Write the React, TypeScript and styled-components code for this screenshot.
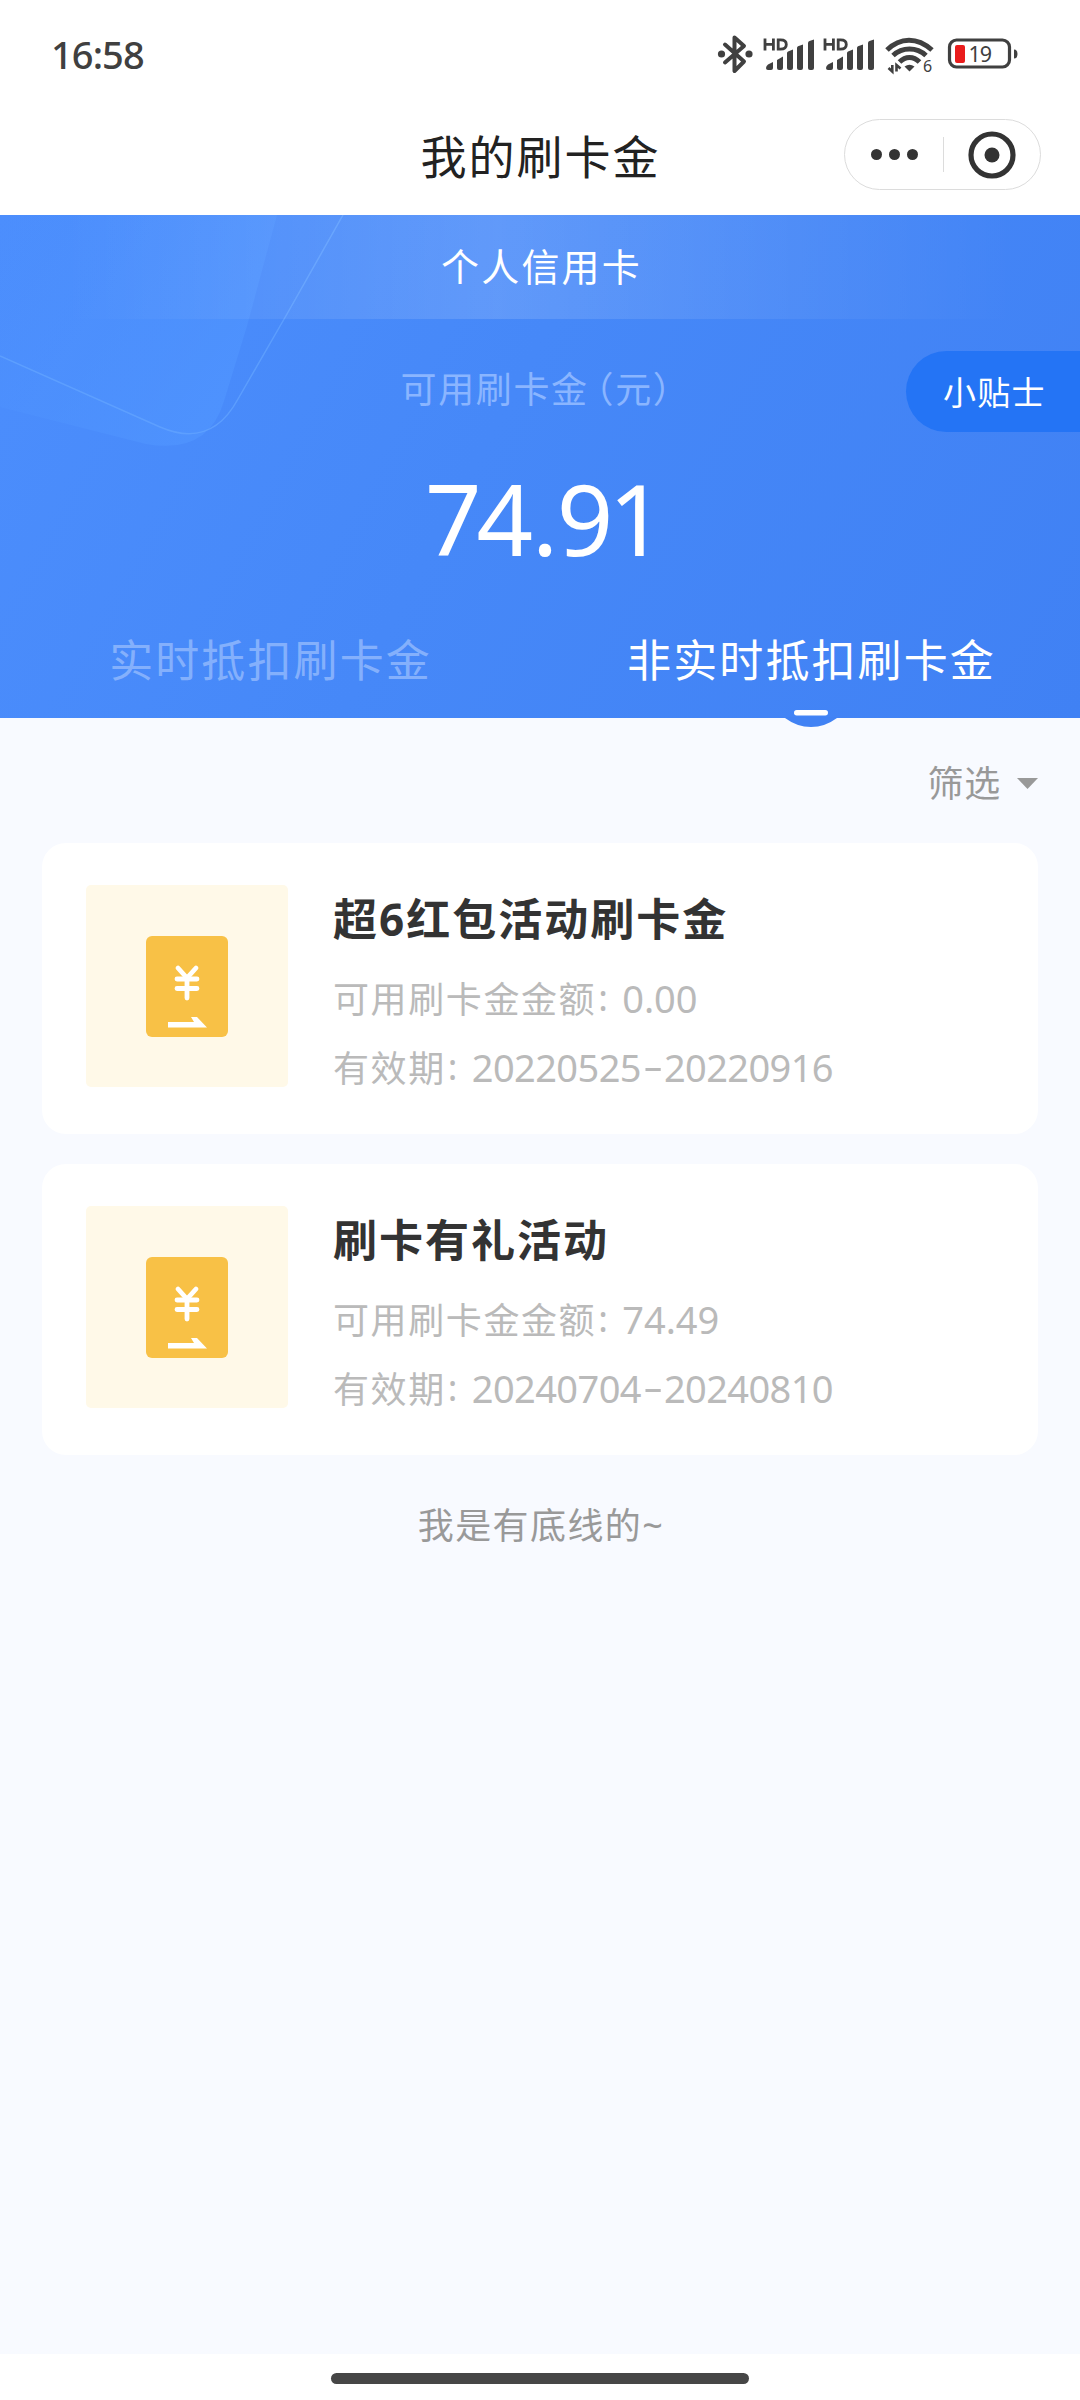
import React from "react";
import styled, { createGlobalStyle } from "styled-components";

const GlobalStyle = createGlobalStyle`
  * { box-sizing: border-box; }
  body {
    margin: 0;
    background: #ffffff;
    font-family: "Noto Sans", "Noto Sans CJK SC", sans-serif;
  }
`;

const Screen = styled.div`
  width: 1080px;
  height: 2400px;
  display: flex;
  flex-direction: column;
  overflow: hidden;
  background: #ffffff;
`;

const StatusBar = styled.header`
  height: 110px;
  padding: 0 61px 0 51px;
  display: flex;
  align-items: center;
  justify-content: space-between;
`;

const Clock = styled.time`
  padding-bottom: 2px;
  color: #404040;
  font-size: 38px;
  font-weight: 500;
  line-height: 40px;
  letter-spacing: -0.9px;
`;

const StatusIcons = styled.div`
  height: 42px;
  display: flex;
  align-items: center;
`;

const NavBar = styled.nav`
  height: 105px;
  padding: 0 39px 16px;
  display: grid;
  grid-template-columns: 1fr auto 1fr;
  align-items: center;
`;

const PageTitle = styled.h1`
  grid-column: 2;
  margin: 0;
  padding: 2px 0 0 1px;
  color: #222222;
  font-size: 46px;
  font-weight: 400;
  line-height: 60px;
  letter-spacing: 2px;
`;

const Capsule = styled.div`
  justify-self: end;
  width: 197px;
  height: 71px;
  border: 1px solid #dcdcdc;
  border-radius: 36px;
  display: grid;
  grid-template-columns: 98px 1px 96px;
  align-items: center;
`;

const CapsuleButton = styled.button`
  height: 100%;
  padding: 0;
  border: 0;
  background: none;
  display: flex;
  align-items: center;
  justify-content: center;
  gap: 7px;
`;

const Dot = styled.span`
  width: 11px;
  height: 11px;
  border-radius: 50%;
  background: #333333;
`;

const CapsuleDivider = styled.span`
  width: 1px;
  height: 35px;
  background: #dcdcdc;
`;

const Hero = styled.section`
  position: relative;
  height: 503px;
  flex: none;
  display: flex;
  flex-direction: column;
  color: #ffffff;
  background: linear-gradient(118deg, #4c8efd 0%, #4688f8 45%, #4081f4 100%);
`;

const HeroPattern = styled.svg`
  position: absolute;
  left: 0;
  top: 0;
`;

const AccountBand = styled.div`
  position: relative;
  flex: none;
  height: 104px;
  padding: 0 0 5px 3px;
  display: flex;
  align-items: center;
  justify-content: center;
  font-size: 38px;
  letter-spacing: 2.2px;
  background: linear-gradient(90deg, rgba(255, 255, 255, 0) 6%, rgba(255, 255, 255, 0.14) 46%, rgba(255, 255, 255, 0) 94%);
`;

const Balance = styled.div`
  position: relative;
  flex: 1;
  display: flex;
  flex-direction: column;
  align-items: center;
`;

const BalanceLabel = styled.div`
  margin-top: 43px;
  padding-right: 7px;
  color: #8ab5ff;
  font-size: 36px;
  line-height: 50px;
  letter-spacing: 1.6px;
  white-space: nowrap;
`;

const Bracket = styled.span<{ $gap?: number }>`
  margin-left: ${(p) => p.$gap ?? 0}px;
  font-family: "Noto Sans CJK SC", sans-serif;
  font-feature-settings: "halt";
`;

const BalanceAmount = styled.div`
  margin-top: 43px;
  padding-left: 5px;
  font-size: 99px;
  line-height: 120px;
  letter-spacing: -5px;
`;

const Point = styled.span`
  margin: 0 3.5px;
`;

const TipsButton = styled.button`
  position: absolute;
  right: 0;
  top: 136px;
  width: 174px;
  height: 81px;
  padding: 0 0 1px 37px;
  border: 0;
  border-radius: 41px 0 0 41px;
  background: #2474f5;
  color: #ffffff;
  text-align: left;
  font-family: inherit;
  font-size: 33px;
  letter-spacing: 1.3px;
`;

const Tabs = styled.div`
  position: relative;
  flex: none;
  height: 117px;
  display: grid;
  grid-template-columns: 1fr 1fr;
`;

const Tab = styled.div<{ $active?: boolean }>`
  position: relative;
  padding: 29px 0 0 ${(p) => (p.$active ? 3 : 1)}px;
  text-align: center;
  color: ${(p) => (p.$active ? "#ffffff" : "#84b0fc")};
  font-size: 44px;
  line-height: 60px;
  letter-spacing: 2.1px;
`;

const TabBump = styled.svg`
  position: absolute;
  left: 245px;
  bottom: -9px;
`;

const Content = styled.main`
  flex: 1;
  padding: 0 42px;
  background: #f8faff;
`;

const FilterRow = styled.div`
  height: 125px;
  padding-top: 6px;
  display: flex;
  align-items: center;
  justify-content: flex-end;
  gap: 16px;
  color: #999999;
  font-size: 36px;
  line-height: 50px;
  letter-spacing: 0.8px;
`;

const CardList = styled.div`
  display: flex;
  flex-direction: column;
  gap: 30px;
`;

const Card = styled.article`
  height: 291px;
  padding: 0 44px;
  border-radius: 24px;
  background: #ffffff;
  display: flex;
  align-items: center;
  gap: 45px;
`;

const Thumb = styled.div`
  width: 202px;
  height: 202px;
  margin-bottom: 5px;
  border-radius: 5px;
  background: #fff9e8;
  display: flex;
  align-items: center;
  justify-content: center;
`;

const CardBody = styled.div`
  height: 100%;
  padding-top: 46px;
`;

const CardTitle = styled.h2`
  margin: 0 0 14px;
  color: #333333;
  font-size: 44px;
  font-weight: 700;
  line-height: 60px;
  letter-spacing: 2px;
`;

const CardLine = styled.p`
  margin: 0;
  height: 69px;
  display: flex;
  align-items: center;
  color: #bababa;
  font-size: 36px;
  letter-spacing: 1.6px;
`;

const Colon = styled.span`
  width: 26px;
  padding-left: 2px;
`;

const Figures = styled.span<{ $tracking?: number }>`
  font-size: 38px;
  letter-spacing: ${(p) => p.$tracking ?? -0.6}px;
`;

const Dash = styled.span`
  display: inline-block;
  width: 23px;
  text-align: center;
  transform: translateY(-2px) scaleX(1.65);
`;

const EndNote = styled.p`
  margin: 46px 0 0;
  padding-left: 2px;
  text-align: center;
  color: #999999;
  font-size: 36px;
  line-height: 50px;
  letter-spacing: 1.4px;
`;

const HomeArea = styled.footer`
  height: 46px;
  padding-top: 19px;
  display: flex;
  justify-content: center;
`;

const HomeIndicator = styled.div`
  width: 418px;
  height: 11px;
  border-radius: 6px;
  background: #464646;
`;

const INK = "#404040";

const BluetoothIcon = () => (
  <svg width="38" height="42" viewBox="0 0 38 42">
    <path d="M8 10.500 L27 27.500 L17.500 37 V3.500 L27 12 L8 28.500" fill="none" stroke={INK} strokeWidth="4" strokeLinejoin="round" strokeLinecap="round" />
    <circle cx="4.500" cy="20" r="3.600" fill={INK} />
    <circle cx="32" cy="20" r="3.600" fill={INK} />
  </svg>
);

const SignalIcon = () => (
  <svg width="60" height="42" viewBox="0 0 60 42">
    <g stroke={INK} strokeWidth="2.800" fill="none">
      <path d="M10 4.500 V16.500 M18.400 4.500 V16.500 M10 10.400 H18.400" />
      <path d="M23.200 5.900 H25.500 Q31.300 5.900 31.300 10.400 Q31.300 15.100 25.500 15.100 H23.200 Z" />
    </g>
    <g fill={INK}>
      <path d="M11 34 Q11 32 13 30.500 L18 28 V34 Q18 36 16 36 H13 Q11 36 11 34 Z" />
      <path d="M22 26 L28 22.500 V34 Q28 36 26 36 H24 Q22 36 22 34 Z" />
      <path d="M32 19 Q32 18 33 17.500 L38 15.500 V34 Q38 36 36 36 H34 Q32 36 32 34 Z" />
      <path d="M42 14 Q42 13 43 12.300 L48 10.500 V34 Q48 36 46 36 H44 Q42 36 42 34 Z" />
      <path d="M53 9 Q53 7.500 54.500 7 L59 5.500 V34 Q59 36 57 36 H55 Q53 36 53 34 Z" />
    </g>
  </svg>
);

const WifiIcon = () => (
  <svg width="60" height="42" viewBox="0 0 60 42">
    <g fill="none" stroke={INK} strokeWidth="5">
      <path d="M12 16 Q22 6.200 34 6.200 Q46 6.200 57 16" />
      <path d="M18 21.500 Q25 15 34.500 15 Q44 15 51 21.500" />
      <path d="M24.500 28 Q29 23.400 34.500 23.400 Q40 23.400 44.500 28" />
    </g>
    <path d="M29.500 32.500 Q34.500 29 39.500 32.500 L34.500 37.500 Z" fill={INK} />
    <path d="M17.300 31 V37.500 L13.500 34 M21.500 37.500 V31 L25.500 34.500" fill="none" stroke={INK} strokeWidth="2.600" />
    <text x="48" y="37.500" fontSize="16" fontFamily="Noto Sans" fill={INK}>6</text>
  </svg>
);

const BatteryIcon = () => (
  <svg width="84" height="42" viewBox="0 0 84 42">
    <rect x="14.500" y="6" width="60" height="27" rx="7" fill="none" stroke={INK} strokeWidth="3.200" />
    <path d="M79 15.500 Q82.500 15.500 82.500 20 Q82.500 24.500 79 24.500 Z" fill={INK} />
    <rect x="20" y="11" width="10" height="18" rx="2" fill="#e91c1c" />
    <text x="33.500" y="28" fontSize="21.500" letterSpacing="-1" fontFamily="Noto Sans" fill={INK}>19</text>
  </svg>
);

const TargetIcon = () => (
  <svg width="48" height="48" viewBox="0 0 48 48">
    <circle cx="24" cy="24" r="21" fill="none" stroke="#333333" strokeWidth="5.200" />
    <circle cx="24" cy="24" r="7.500" fill="#333333" />
  </svg>
);

const RedPacketIcon = () => (
  <svg width="82" height="101" viewBox="0 0 82 101">
    <rect width="82" height="101" rx="6" fill="#f8c146" />
    <g stroke="#ffffff" strokeWidth="4.800" strokeLinecap="round" fill="none">
      <path d="M32 32 L41 42 L50 32 M41 42 V62" />
      <path d="M31 43 H51 M31 52.500 H51" />
    </g>
    <path d="M22 86 H48 L45 81 H51 L61 91.500 H22 Z" fill="#ffffff" />
  </svg>
);

type Reward = { title: string; amount: string; from: string; to: string };

const rewards: Reward[] = [
  { title: "超6红包活动刷卡金", amount: "0.00", from: "20220525", to: "20220916" },
  { title: "刷卡有礼活动", amount: "74.49", from: "20240704", to: "20240810" },
];

const RewardCard = ({ title, amount, from, to }: Reward) => (
  <Card>
    <Thumb>
      <RedPacketIcon />
    </Thumb>
    <CardBody>
      <CardTitle>{title}</CardTitle>
      <CardLine>
        可用刷卡金金额<Colon>:</Colon>
        <Figures $tracking={0}>{amount}</Figures>
      </CardLine>
      <CardLine>
        有效期<Colon>:</Colon>
        <Figures>
          {from}
          <Dash>-</Dash>
          {to}
        </Figures>
      </CardLine>
    </CardBody>
  </Card>
);

export default function App() {
  return (
    <Screen>
      <GlobalStyle />
      <StatusBar>
        <Clock>16:58</Clock>
        <StatusIcons>
          <BluetoothIcon />
          <SignalIcon />
          <SignalIcon />
          <WifiIcon />
          <BatteryIcon />
        </StatusIcons>
      </StatusBar>
      <NavBar>
        <PageTitle>我的刷卡金</PageTitle>
        <Capsule>
          <CapsuleButton aria-label="更多">
            <Dot />
            <Dot />
            <Dot />
          </CapsuleButton>
          <CapsuleDivider />
          <CapsuleButton aria-label="关闭">
            <TargetIcon />
          </CapsuleButton>
        </Capsule>
      </NavBar>
      <Hero>
        <HeroPattern width="400" height="260" viewBox="0 0 400 260">
          <defs>
            <linearGradient id="sheet" x1="0" y1="0" x2="1" y2="0.6">
              <stop offset="0" stopColor="#5095ff" stopOpacity="0" />
              <stop offset="1" stopColor="#5095ff" stopOpacity="0.75" />
            </linearGradient>
          </defs>
          <path d="M0 0 H277 L247 111 L224 186 Q208 240 146 229 L0 192 Z" fill="url(#sheet)" />
          <path d="M343 0 L287 99 L238 184 Q211 234 160 212 L0 141" fill="none" stroke="#64a5ff" strokeOpacity="0.7" strokeWidth="1.500" />
        </HeroPattern>
        <AccountBand>个人信用卡</AccountBand>
        <Balance>
          <BalanceLabel>
            可用刷卡金<Bracket $gap={7}>（</Bracket>元<Bracket>）</Bracket>
          </BalanceLabel>
          <BalanceAmount>
            74<Point>.</Point>91
          </BalanceAmount>
        </Balance>
        <TipsButton>小贴士</TipsButton>
        <Tabs>
          <Tab>实时抵扣刷卡金</Tab>
          <Tab $active>
            非实时抵扣刷卡金
            <TabBump width="52" height="18" viewBox="0 0 52 18">
              <path d="M0 9 Q12 18 26 18 Q40 18 52 9 V8 H0 Z" fill="#4182f4" />
              <rect x="9" y="1" width="34" height="5.500" rx="2.700" fill="#ffffff" />
            </TabBump>
          </Tab>
        </Tabs>
      </Hero>
      <Content>
        <FilterRow>
          筛选
          <svg width="21" height="11" viewBox="0 0 21 11">
            <path d="M0 0 H21 L10.500 11 Z" fill="#999999" />
          </svg>
        </FilterRow>
        <CardList>
          {rewards.map((r) => (
            <RewardCard key={r.title} {...r} />
          ))}
        </CardList>
        <EndNote>我是有底线的~</EndNote>
      </Content>
      <HomeArea>
        <HomeIndicator />
      </HomeArea>
    </Screen>
  );
}
